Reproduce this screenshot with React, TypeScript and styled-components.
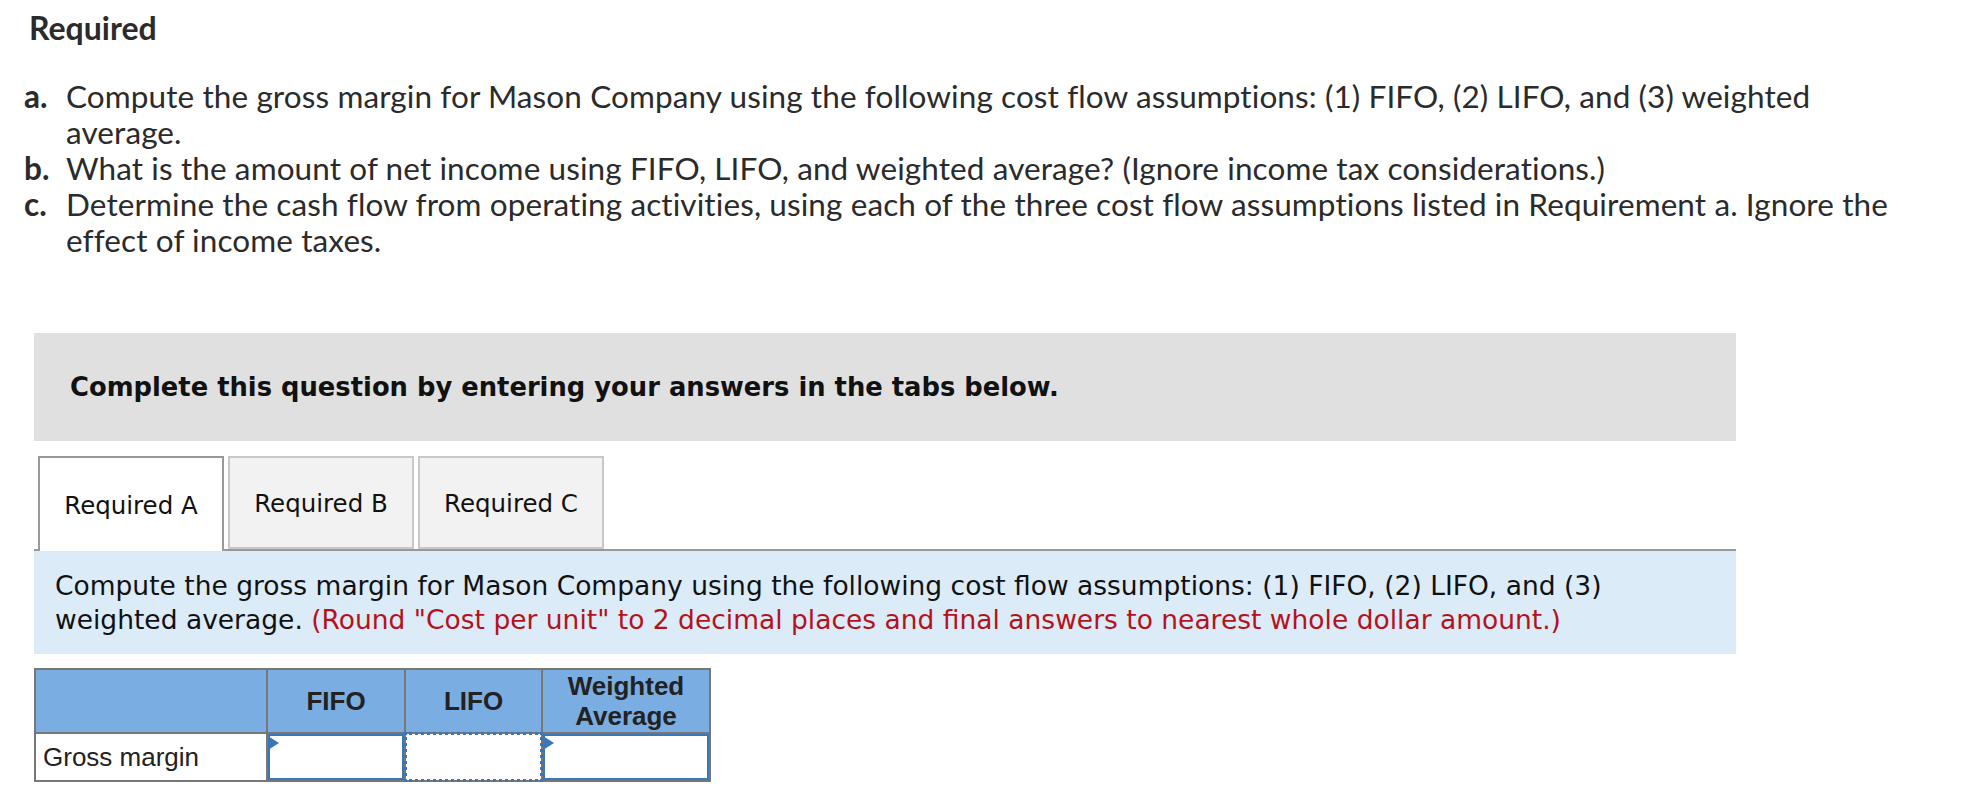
import styled, { createGlobalStyle } from 'styled-components';

const GlobalStyle = createGlobalStyle`
  body {
    margin: 0;
    background: #ffffff;
    color: #222;
  }
`;

const Page = styled.div`
  padding: 10px 0 0 0;
  width: 1972px;
`;

const Heading = styled.h3`
  margin: 0 0 32px 29px;
  font-family: Lato, "Open Sans", sans-serif;
  font-weight: 700;
  font-size: 32px;
  line-height: 36px;
  color: #2b2b2b;
`;

const ReqList = styled.div`
  display: flex;
  flex-direction: column;
  margin-left: 24px;
  width: 1895px;
  font-family: Lato, "Open Sans", sans-serif;
  font-size: 31.5px;
  letter-spacing: 0.1px;
  line-height: 36px;
  color: #2b2b2b;
`;

const ReqItem = styled.div`
  display: grid;
  grid-template-columns: 42px 1fr;
`;

const ReqLabel = styled.span`
  font-weight: 700;
`;

const Panel = styled.div`
  margin: 75px 0 0 34px;
  width: 1702px;
`;

const Notice = styled.div`
  background: #e0e0e0;
  height: 108px;
  padding-left: 36px;
  display: flex;
  align-items: center;
  font-family: "DejaVu Sans", Verdana, sans-serif;
  font-weight: 700;
  font-size: 25.8px;
  color: #111;
`;

const TabBar = styled.div`
  display: flex;
  gap: 4px;
  margin-top: 15px;
  padding-left: 4px;
  border-bottom: 2px solid #999;
  height: 93px;
`;

const Tab = styled.div<{ $active?: boolean }>`
  width: 186px;
  display: flex;
  align-items: center;
  justify-content: center;
  padding-top: 2px;
  font-family: "DejaVu Sans", Verdana, sans-serif;
  font-size: 24.5px;
  color: #111;
  box-sizing: border-box;
  background: ${(p) => (p.$active ? '#ffffff' : '#f2f2f2')};
  border: 2px solid ${(p) => (p.$active ? '#999' : '#c8c8c8')};
  border-bottom: ${(p) => (p.$active ? 'none' : '2px solid #c8c8c8')};
  height: ${(p) => (p.$active ? '95px' : '93px')};
  position: relative;
  z-index: ${(p) => (p.$active ? 1 : 0)};
`;

const Prompt = styled.div`
  background: #dbebf8;
  padding: 18px 100px 17px 21px;
  font-family: "DejaVu Sans", Verdana, sans-serif;
  font-size: 26.5px;
  line-height: 34px;
  color: #111;
`;

const Hint = styled.span`
  color: #b5121b;
`;

const Grid = styled.table`
  margin-top: 14px;
  border-collapse: collapse;
  font-family: "Liberation Sans", Arial, sans-serif;
  font-size: 26px;
  color: #222;
`;

const HeadCell = styled.th<{ $w: number }>`
  width: ${(p) => p.$w}px;
  height: 62px;
  background: #7aade1;
  border: 2px solid #777;
  font-weight: 700;
  line-height: 30px;
  padding: 0;
  text-align: center;
`;

const LabelCell = styled.td`
  border: 2px solid #777;
  height: 44px;
  padding: 0 0 0 7px;
  text-align: left;
`;

const InputCell = styled.td`
  border: 2px solid #777;
  padding: 0;
  height: 44px;
  position: relative;
`;

const AnswerBox = styled.div<{ $focused?: boolean }>`
  box-sizing: border-box;
  height: 46px;
  background: #fff;
  border: ${(p) => (p.$focused ? 'none' : '2px solid #3b76b8')};
  outline: ${(p) => (p.$focused ? '3px dotted #3b76b8' : 'none')};
  outline-offset: -1px;
`;

const Marker = styled.span`
  position: absolute;
  left: 0;
  top: 2px;
  width: 0;
  height: 0;
  border-top: 7px solid transparent;
  border-bottom: 7px solid transparent;
  border-left: 11px solid #3b76b8;
`;

export default function App() {
  return (
    <Page>
      <GlobalStyle />
      <Heading>Required</Heading>
      <ReqList>
        <ReqItem>
          <ReqLabel>a.</ReqLabel>
          <span>
            Compute the gross margin for Mason Company using the following cost flow assumptions: (1) FIFO, (2)
            LIFO, and (3) weighted average.
          </span>
        </ReqItem>
        <ReqItem>
          <ReqLabel>b.</ReqLabel>
          <span>
            What is the amount of net income using FIFO, LIFO, and weighted average? (Ignore income tax
            considerations.)
          </span>
        </ReqItem>
        <ReqItem>
          <ReqLabel>c.</ReqLabel>
          <span>
            Determine the cash flow from operating activities, using each of the three cost flow assumptions listed
            in Requirement a. Ignore the effect of income taxes.
          </span>
        </ReqItem>
      </ReqList>

      <Panel>
        <Notice>Complete this question by entering your answers in the tabs below.</Notice>
        <TabBar>
          <Tab $active>Required A</Tab>
          <Tab>Required B</Tab>
          <Tab>Required C</Tab>
        </TabBar>
        <Prompt>
          Compute the gross margin for Mason Company using the following cost flow assumptions: (1) FIFO, (2) LIFO,
          and (3) weighted average.{' '}
          <Hint>(Round "Cost per unit" to 2 decimal places and final answers to nearest whole dollar amount.)</Hint>
        </Prompt>
        <Grid>
          <thead>
            <tr>
              <HeadCell $w={230} />
              <HeadCell $w={136}>FIFO</HeadCell>
              <HeadCell $w={135}>LIFO</HeadCell>
              <HeadCell $w={166}>
                Weighted
                <br />
                Average
              </HeadCell>
            </tr>
          </thead>
          <tbody>
            <tr>
              <LabelCell>Gross margin</LabelCell>
              <InputCell>
                <AnswerBox />
                <Marker />
              </InputCell>
              <InputCell>
                <AnswerBox $focused />
              </InputCell>
              <InputCell>
                <AnswerBox />
                <Marker />
              </InputCell>
            </tr>
          </tbody>
        </Grid>
      </Panel>
    </Page>
  );
}
